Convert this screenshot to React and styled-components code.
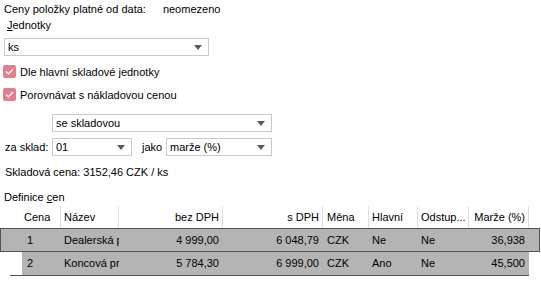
import styled, { createGlobalStyle } from 'styled-components'

const GlobalStyle = createGlobalStyle`
  body {
    margin: 0;
    background: #fff;
    font-family: "Liberation Sans", Arial, sans-serif;
    font-size: 11px;
    color: #000;
  }
`

const Page = styled.div`
  width: 541px;
  height: 281px;
  overflow: hidden;
  display: flex;
  flex-direction: column;
`

const Line = styled.div`
  height: 18px;
  line-height: 18px;
  padding-left: ${(p) => p.$indent ?? 4}px;
  margin-top: ${(p) => p.$top ?? 0}px;
  white-space: nowrap;
`

const Value = styled.span`
  margin-left: 17px;
`

const Key = styled.span`
  text-decoration: underline;
`

const Select = styled.div`
  box-sizing: border-box;
  position: relative;
  height: 18px;
  width: ${(p) => p.$w}px;
  margin-left: ${(p) => p.$left ?? 0}px;
  margin-top: ${(p) => p.$top ?? 0}px;
  border: 1px solid #cacaca;
  background: #fff;
  line-height: 16px;
  padding-left: 3px;
  flex-shrink: 0;
  &::after {
    content: '';
    position: absolute;
    right: 6px;
    top: 6px;
    border-left: 4px solid transparent;
    border-right: 4px solid transparent;
    border-top: 5px solid #5c5c5c;
  }
`

const CheckRow = styled.label`
  display: flex;
  align-items: center;
  gap: 4px;
  height: 19px;
  padding-left: 3px;
  margin-top: ${(p) => p.$top}px;
`

const Box = styled.span`
  width: 13px;
  height: 13px;
  border-radius: 2px;
  background: #e67d8d;
  display: flex;
  align-items: center;
  justify-content: center;
`

const InlineRow = styled.div`
  display: flex;
  align-items: center;
  height: 18px;
  margin-top: 6px;
  padding-left: 5px;
`

const InlineLabel = styled.span`
  width: ${(p) => p.$w}px;
  margin-left: ${(p) => p.$left ?? 0}px;
  flex-shrink: 0;
`

const Grid = styled.div`
  display: grid;
  grid-template-columns: 22px 39px 58px 104px 100px 46px 49px 51px 60px;
  width: ${(p) => p.$w ?? 529}px;
  height: ${(p) => p.$h}px;
  line-height: ${(p) => p.$h}px;
  background: ${(p) => (p.$selected ? '#b4b4b4' : 'transparent')};
  box-shadow: ${(p) => (p.$selected ? 'inset 0 0 0 1px #555' : 'none')};
`

const HeadCell = styled.div`
  box-sizing: border-box;
  border-right: ${(p) => (p.$noLine ? 'none' : '1px solid #dedede')};
  padding: 0 ${(p) => (p.$right ? 3 : 0)}px 0 ${(p) => p.$pl ?? 3}px;
  text-align: ${(p) => (p.$right ? 'right' : 'left')};
  white-space: nowrap;
  overflow: hidden;
  height: 22px;
`

const Cell = styled.div`
  box-sizing: border-box;
  padding: 0 ${(p) => (p.$right ? 4 : 0)}px 0 ${(p) => p.$pl ?? 3}px;
  text-align: ${(p) => (p.$right ? 'right' : 'left')};
  white-space: nowrap;
  overflow: hidden;
  background: ${(p) => (p.$fill ? '#b4b4b4' : 'transparent')};
`

const BottomRule = styled.div`
  height: 1px;
  width: 519px;
  margin-left: 10px;
  background: #555;
`

const Check = () => (
  <Box>
    <svg width="9" height="7" viewBox="0 0 9 7">
      <path d="M1 3.5 L3.5 6 L8 1" fill="none" stroke="#fff" strokeWidth="1.3" />
    </svg>
  </Box>
)

const rows = [
  { id: '1', name: 'Dealerská p', bez: '4 999,00', s: '6 048,79', cur: 'CZK', main: 'Ne', off: 'Ne', marze: '36,938' },
  { id: '2', name: 'Koncová pr', bez: '5 784,30', s: '6 999,00', cur: 'CZK', main: 'Ano', off: 'Ne', marze: '45,500' },
]

export default function App() {
  return (
    <Page>
      <GlobalStyle />
      <Line>
        Ceny položky platné od data:<Value>neomezeno</Value>
      </Line>
      <Line $indent={7} $top={-2}>
        <Key>J</Key>ednotky
      </Line>
      <Select $w={205} $left={4} $top={4}>ks</Select>
      <CheckRow $top={6}>
        <Check />
        Dle hlavní skladové jednotky
      </CheckRow>
      <CheckRow $top={4}>
        <Check />
        Porovnávat s nákladovou cenou
      </CheckRow>
      <Select $w={220} $left={52} $top={10}>se skladovou</Select>
      <InlineRow>
        <InlineLabel $w={47}>za sklad:</InlineLabel>
        <Select $w={80}>01</Select>
        <InlineLabel $w={24} $left={10}>jako</InlineLabel>
        <Select $w={106}>marže (%)</Select>
      </InlineRow>
      <Line $indent={5} $top={7}>Skladová cena: 3152,46 CZK / ks</Line>
      <Line $top={7}>
        Definice <Key>c</Key>en
      </Line>

      <Grid $h={22}>
        <HeadCell $noLine />
        <HeadCell $pl={2}>Cena</HeadCell>
        <HeadCell>Název</HeadCell>
        <HeadCell $right>bez DPH</HeadCell>
        <HeadCell $right>s DPH</HeadCell>
        <HeadCell $pl={4}>Měna</HeadCell>
        <HeadCell>Hlavní</HeadCell>
        <HeadCell>Odstup...</HeadCell>
        <HeadCell $right>Marže (%)</HeadCell>
      </Grid>
      {rows.map((r, i) => {
        const sel = i === 0
        const fill = !sel
        return (
          <Grid key={r.id} $h={sel ? 24 : 23} $w={sel ? 540 : 529} $selected={sel}>
            <Cell />
            <Cell $pl={5} $fill={fill}>{r.id}</Cell>
            <Cell $fill={fill}>{r.name}</Cell>
            <Cell $right $fill={fill}>{r.bez}</Cell>
            <Cell $right $fill={fill}>{r.s}</Cell>
            <Cell $pl={4} $fill={fill}>{r.cur}</Cell>
            <Cell $fill={fill}>{r.main}</Cell>
            <Cell $fill={fill}>{r.off}</Cell>
            <Cell $right $fill={fill}>{r.marze}</Cell>
          </Grid>
        )
      })}
      <BottomRule />
    </Page>
  )
}
